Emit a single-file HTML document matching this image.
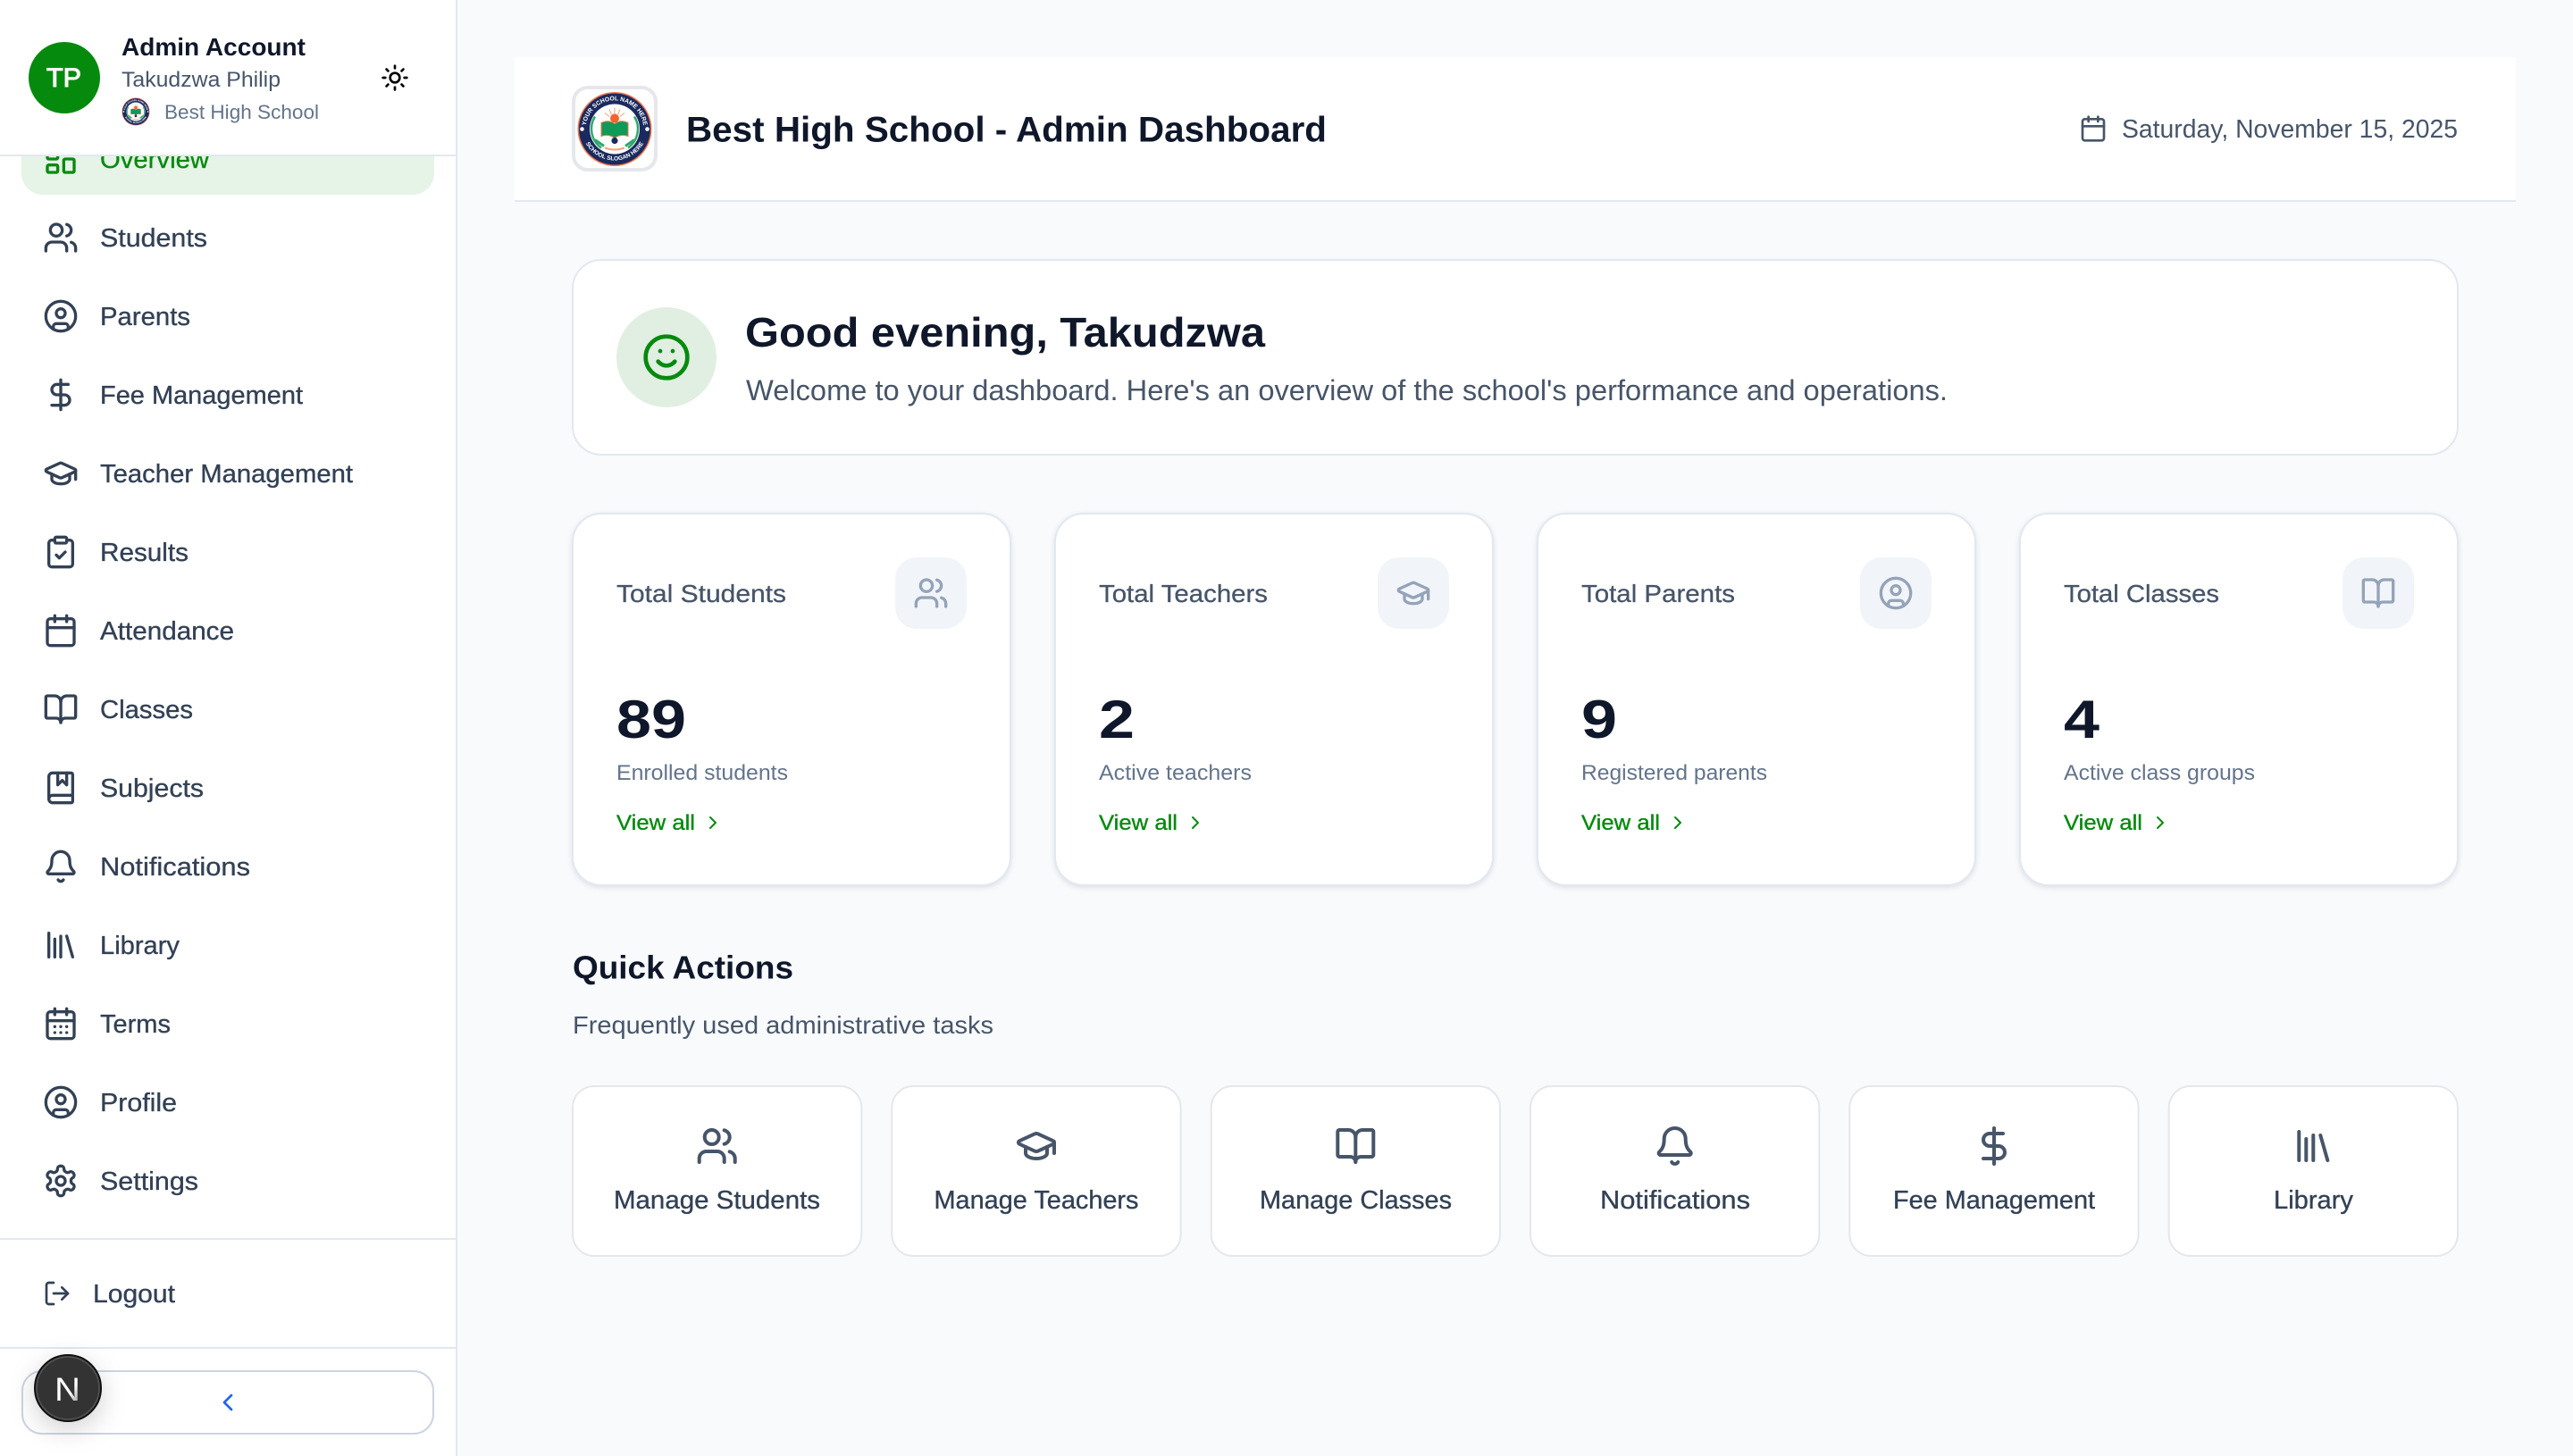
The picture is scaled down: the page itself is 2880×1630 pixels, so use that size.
<!DOCTYPE html>
<html lang="en">
<head>
<meta charset="utf-8">
<title>Best High School - Admin Dashboard</title>
<style>
html,body{margin:0;padding:0;width:2880px;height:1630px;overflow:hidden;background:#f8fafc}
svg{display:block}
text{font-family:"Liberation Sans",Arial,sans-serif}
.ic{fill:none;stroke-linecap:round;stroke-linejoin:round}
.nav{font-size:29px;fill:#334155;stroke:#334155;stroke-width:.35px}
.lab{font-size:28px;fill:#475569;stroke:#475569;stroke-width:.3px}
.num{font-size:60px;font-weight:700;fill:#0f172a}
.sub{font-size:24px;fill:#64748b}
.va{font-size:24px;fill:#068a0e;stroke:#068a0e;stroke-width:.35px}
.act{font-size:29px;fill:#334155;stroke:#334155;stroke-width:.35px;text-anchor:start}
.card{fill:#fff;stroke:#e2e8f0;stroke-width:2;filter:drop-shadow(0 2px 3px rgba(15,23,42,.11))}
.qa{fill:#fff;stroke:#e5e7eb;stroke-width:2}
</style>
</head>
<body>
<svg width="2880" height="1630" viewBox="0 0 2880 1630" xmlns="http://www.w3.org/2000/svg">
<defs>
<symbol id="users" viewBox="0 0 24 24"><path d="M16 21v-2a4 4 0 0 0-4-4H6a4 4 0 0 0-4 4v2"/><circle cx="9" cy="7" r="4"/><path d="M22 21v-2a4 4 0 0 0-3-3.87"/><path d="M16 3.13a4 4 0 0 1 0 7.75"/></symbol>
<symbol id="cuser" viewBox="0 0 24 24"><circle cx="12" cy="12" r="10"/><circle cx="12" cy="10" r="3"/><path d="M7 20.662V19a2 2 0 0 1 2-2h6a2 2 0 0 1 2 2v1.662"/></symbol>
<symbol id="dollar" viewBox="0 0 24 24"><path d="M12 2v20"/><path d="M17 5H9.5a3.5 3.5 0 0 0 0 7h5a3.5 3.5 0 0 1 0 7H6"/></symbol>
<symbol id="cap" viewBox="0 0 24 24"><path d="M21.42 10.922a1 1 0 0 0-.019-1.838L12.83 5.18a2 2 0 0 0-1.66 0L2.6 9.08a1 1 0 0 0 0 1.832l8.57 3.908a2 2 0 0 0 1.66 0z"/><path d="M22 10v6"/><path d="M6 12.5V16a6 3 0 0 0 12 0v-3.5"/></symbol>
<symbol id="clip" viewBox="0 0 24 24"><rect width="8" height="4" x="8" y="2" rx="1" ry="1"/><path d="M16 4h2a2 2 0 0 1 2 2v14a2 2 0 0 1-2 2H6a2 2 0 0 1-2-2V6a2 2 0 0 1 2-2h2"/><path d="m9 14 2 2 4-4"/></symbol>
<symbol id="cal" viewBox="0 0 24 24"><path d="M8 2v4"/><path d="M16 2v4"/><rect width="18" height="18" x="3" y="4" rx="2"/><path d="M3 10h18"/></symbol>
<symbol id="book" viewBox="0 0 24 24"><path d="M12 7v14"/><path d="M3 18a1 1 0 0 1-1-1V4a1 1 0 0 1 1-1h5a4 4 0 0 1 4 4 4 4 0 0 1 4-4h5a1 1 0 0 1 1 1v13a1 1 0 0 1-1 1h-6a3 3 0 0 0-3 3 3 3 0 0 0-3-3z"/></symbol>
<symbol id="bmark" viewBox="0 0 24 24"><path d="M10 2v8l3-3 3 3V2"/><path d="M4 19.5v-15A2.5 2.5 0 0 1 6.5 2H19a1 1 0 0 1 1 1v18a1 1 0 0 1-1 1H6.5a1 1 0 0 1 0-5H20"/></symbol>
<symbol id="bell" viewBox="0 0 24 24"><path d="M10.268 21a2 2 0 0 0 3.464 0"/><path d="M3.262 15.326A1 1 0 0 0 4 17h16a1 1 0 0 0 .74-1.673C19.41 13.956 18 12.499 18 8A6 6 0 0 0 6 8c0 4.499-1.411 5.956-2.738 7.326"/></symbol>
<symbol id="lib" viewBox="0 0 24 24"><path d="m16 6 4 14"/><path d="M12 6v14"/><path d="M8 8v12"/><path d="M4 4v16"/></symbol>
<symbol id="cald" viewBox="0 0 24 24"><path d="M8 2v4"/><path d="M16 2v4"/><rect width="18" height="18" x="3" y="4" rx="2"/><path d="M3 10h18"/><path d="M8 14h.01"/><path d="M12 14h.01"/><path d="M16 14h.01"/><path d="M8 18h.01"/><path d="M12 18h.01"/><path d="M16 18h.01"/></symbol>
<symbol id="gear" viewBox="0 0 24 24"><path d="M12.22 2h-.44a2 2 0 0 0-2 2v.18a2 2 0 0 1-1 1.73l-.43.25a2 2 0 0 1-2 0l-.15-.08a2 2 0 0 0-2.73.73l-.22.38a2 2 0 0 0 .73 2.73l.15.1a2 2 0 0 1 1 1.72v.51a2 2 0 0 1-1 1.74l-.15.09a2 2 0 0 0-.73 2.73l.22.38a2 2 0 0 0 2.73.73l.15-.08a2 2 0 0 1 2 0l.43.25a2 2 0 0 1 1 1.73V20a2 2 0 0 0 2 2h.44a2 2 0 0 0 2-2v-.18a2 2 0 0 1 1-1.73l.43-.25a2 2 0 0 1 2 0l.15.08a2 2 0 0 0 2.73-.73l.22-.39a2 2 0 0 0-.73-2.73l-.15-.08a2 2 0 0 1-1-1.74v-.5a2 2 0 0 1 1-1.74l.15-.09a2 2 0 0 0 .73-2.73l-.22-.38a2 2 0 0 0-2.73-.73l-.15.08a2 2 0 0 1-2 0l-.43-.25a2 2 0 0 1-1-1.73V4a2 2 0 0 0-2-2z"/><circle cx="12" cy="12" r="3"/></symbol>
<symbol id="logout" viewBox="0 0 24 24"><path d="M9 21H5a2 2 0 0 1-2-2V5a2 2 0 0 1 2-2h4"/><path d="m16 17 5-5-5-5"/><path d="M21 12H9"/></symbol>
<symbol id="sun" viewBox="0 0 24 24"><circle cx="12" cy="12" r="4"/><path d="M12 2v2"/><path d="M12 20v2"/><path d="m4.93 4.93 1.41 1.41"/><path d="m17.66 17.66 1.41 1.41"/><path d="M2 12h2"/><path d="M20 12h2"/><path d="m6.34 17.66-1.41 1.41"/><path d="m19.07 4.93-1.41 1.41"/></symbol>
<symbol id="smile" viewBox="0 0 24 24"><circle cx="12" cy="12" r="10"/><path d="M8 14s1.5 2 4 2 4-2 4-2"/><path d="M9 9h.01"/><path d="M15 9h.01"/></symbol>
<symbol id="dash" viewBox="0 0 24 24"><rect width="7" height="9" x="3" y="3" rx="1"/><rect width="7" height="5" x="14" y="3" rx="1"/><rect width="7" height="9" x="14" y="12" rx="1"/><rect width="7" height="5" x="3" y="16" rx="1"/></symbol>
<symbol id="chr" viewBox="0 0 24 24"><path d="m9 18 6-6-6-6"/></symbol>
<symbol id="chl" viewBox="0 0 24 24"><path d="m15 18-6-6 6-6"/></symbol>

<g id="emblem">
  <circle cx="0" cy="0" r="41.5" fill="#f0754a"/>
  <circle cx="0" cy="0" r="40" fill="#1a2a5e"/>
  <circle cx="0" cy="0" r="28" fill="#fff"/>
  <path id="arcTop" d="M-32 6A32.5 32.5 0 1 1 32 6" fill="none"/>
  <path id="arcBot" d="M-37 -2A37 37 0 0 0 37 -2" fill="none"/>
  <text font-size="6.8" font-weight="700" fill="#fff"><textPath href="#arcTop" startOffset="50%" text-anchor="middle">YOUR SCHOOL NAME HERE</textPath></text>
  <text font-size="6.6" font-weight="700" fill="#fff"><textPath href="#arcBot" startOffset="50%" text-anchor="middle">SCHOOL SLOGAN HERE</textPath></text>
  <circle cx="-36.5" cy="0" r="2.3" fill="#fff"/><circle cx="36.5" cy="0" r="2.3" fill="#fff"/>
  <path d="M-22 -14A26 26 0 0 0 -15 21M22 -14A26 26 0 0 1 15 21" fill="none" stroke="#2fa86c" stroke-width="2.4"/>
  <circle cx="0" cy="-12" r="5" fill="#f0652f"/>
  <path d="M0 -24V-17M-6 -22-3.5 -16M6 -22 3.5 -16M-11 -18-6 -14M11 -18 6 -14" stroke="#f5a27a" stroke-width="1" fill="none"/>
  <path d="M-15 -7Q-7 -11 0 -6Q7 -11 15 -7V8Q7 5 0 10Q-7 5 -15 8Z" fill="#0f9a58" stroke="#f0754a" stroke-width="1"/>
  <circle cx="0" cy="13" r="3.6" fill="#1a2a5e"/>
  <path d="M-22 12-12 19M22 12 12 19" stroke="#2fa86c" stroke-width="3"/>
  <path d="M-11 21Q0 25 11 21" stroke="#f5a27a" stroke-width="2" fill="none"/>
</g>
<linearGradient id="ng" x1="0" y1="0" x2="1" y2="1"><stop offset="0" stop-color="#fff"/><stop offset=".6" stop-color="#fff"/><stop offset="1" stop-color="#777"/></linearGradient>
</defs>

<!-- page -->
<rect width="2880" height="1630" fill="#f8fafc"/>

<!-- sidebar -->
<rect x="0" y="0" width="510" height="1630" fill="#fff"/>
<rect x="510" y="0" width="2" height="1630" fill="#e2e8f0"/>

<!-- active item -->
<rect x="24" y="138" width="462" height="80" rx="24" fill="#e6f3e7"/>
<use href="#dash" x="48" y="158" width="40" height="40" class="ic" stroke="#068a0e" stroke-width="2"/>
<text x="112" y="188" font-size="29" fill="#068a0e" stroke="#068a0e" stroke-width=".35" textLength="122" lengthAdjust="spacingAndGlyphs">Overview</text>

<!-- nav -->
<g class="ic" stroke="#334155" stroke-width="2">
<use href="#users" x="48" y="246" width="40" height="40"/>
<use href="#cuser" x="48" y="334" width="40" height="40"/>
<use href="#dollar" x="48" y="422" width="40" height="40"/>
<use href="#cap" x="48" y="510" width="40" height="40"/>
<use href="#clip" x="48" y="598" width="40" height="40"/>
<use href="#cal" x="48" y="686" width="40" height="40"/>
<use href="#book" x="48" y="774" width="40" height="40"/>
<use href="#bmark" x="48" y="862" width="40" height="40"/>
<use href="#bell" x="48" y="950" width="40" height="40"/>
<use href="#lib" x="48" y="1038" width="40" height="40"/>
<use href="#cald" x="48" y="1126" width="40" height="40"/>
<use href="#cuser" x="48" y="1214" width="40" height="40"/>
<use href="#gear" x="48" y="1302" width="40" height="40"/>
</g>
<text class="nav" x="112" y="276" textLength="120" lengthAdjust="spacingAndGlyphs">Students</text>
<text class="nav" x="112" y="364" textLength="101" lengthAdjust="spacingAndGlyphs">Parents</text>
<text class="nav" x="112" y="452" textLength="227" lengthAdjust="spacingAndGlyphs">Fee Management</text>
<text class="nav" x="112" y="540" textLength="283" lengthAdjust="spacingAndGlyphs">Teacher Management</text>
<text class="nav" x="112" y="628" textLength="99" lengthAdjust="spacingAndGlyphs">Results</text>
<text class="nav" x="112" y="716" textLength="150" lengthAdjust="spacingAndGlyphs">Attendance</text>
<text class="nav" x="112" y="804" textLength="104" lengthAdjust="spacingAndGlyphs">Classes</text>
<text class="nav" x="112" y="892" textLength="116" lengthAdjust="spacingAndGlyphs">Subjects</text>
<text class="nav" x="112" y="980" textLength="168" lengthAdjust="spacingAndGlyphs">Notifications</text>
<text class="nav" x="112" y="1068" textLength="89" lengthAdjust="spacingAndGlyphs">Library</text>
<text class="nav" x="112" y="1156" textLength="79" lengthAdjust="spacingAndGlyphs">Terms</text>
<text class="nav" x="112" y="1244" textLength="86" lengthAdjust="spacingAndGlyphs">Profile</text>
<text class="nav" x="112" y="1332" textLength="110" lengthAdjust="spacingAndGlyphs">Settings</text>

<rect x="0" y="1386" width="510" height="2" fill="#e2e8f0"/>
<use href="#logout" x="48" y="1432" width="32" height="32" class="ic" stroke="#334155" stroke-width="2"/>
<text class="nav" x="104" y="1458" textLength="92" lengthAdjust="spacingAndGlyphs">Logout</text>
<rect x="0" y="1508" width="510" height="2" fill="#e2e8f0"/>

<rect x="25" y="1535" width="460" height="70" rx="22" fill="#fff" stroke="#cbd5e1" stroke-width="2"/>
<use href="#chl" x="239" y="1554" width="32" height="32" class="ic" stroke="#2563eb" stroke-width="2"/>

<!-- next badge -->
<circle cx="76" cy="1554" r="37" fill="#333" stroke="#111" stroke-width="2" style="filter:drop-shadow(0 8px 14px rgba(0,0,0,.18))"/>
<circle cx="76" cy="1554" r="35" fill="none" stroke="#555" stroke-width="1.5"/>
<text x="61" y="1568" font-size="37" fill="url(#ng)" textLength="29" lengthAdjust="spacingAndGlyphs">N</text>

<!-- sidebar header (covers top of overview) -->
<rect x="0" y="0" width="510" height="173" fill="#fff"/>
<rect x="0" y="173" width="512" height="2" fill="#e2e8f0"/>
<circle cx="72" cy="87" r="40" fill="#068a0e"/>
<text x="52" y="97" font-size="30" fill="#fff" stroke="#fff" stroke-width="1" textLength="39" lengthAdjust="spacingAndGlyphs">TP</text>
<text x="136" y="62" font-size="28" font-weight="700" fill="#0f172a" textLength="206" lengthAdjust="spacingAndGlyphs">Admin Account</text>
<text x="136" y="97" font-size="24" fill="#475569" textLength="178" lengthAdjust="spacingAndGlyphs">Takudzwa Philip</text>
<use href="#emblem" transform="translate(152 125) scale(.373)"/>
<text x="184" y="133" font-size="22" fill="#64748b" textLength="173" lengthAdjust="spacingAndGlyphs">Best High School</text>
<use href="#sun" x="426" y="71" width="32" height="32" class="ic" stroke="#000" stroke-width="2"/>

<!-- top header -->
<rect x="576" y="64" width="2240" height="160" fill="#fff"/>
<rect x="576" y="224" width="2240" height="2" fill="#e2e8f0"/>
<rect x="642" y="98" width="92" height="92" rx="16" fill="#fff" stroke="#e5e7eb" stroke-width="4"/>
<use href="#emblem" transform="translate(688 144.5)"/>
<text x="768" y="158.5" font-size="40" font-weight="700" fill="#0f172a" textLength="717" lengthAdjust="spacingAndGlyphs">Best High School - Admin Dashboard</text>
<use href="#cal" x="2327" y="128" width="32" height="32" class="ic" stroke="#475569" stroke-width="2"/>
<text x="2375" y="154" font-size="29" fill="#475569" textLength="376" lengthAdjust="spacingAndGlyphs">Saturday, November 15, 2025</text>

<!-- welcome -->
<rect x="641" y="291" width="2110" height="218" rx="32" fill="#fff" stroke="#e2e8f0" stroke-width="2"/>
<circle cx="746" cy="400" r="56" fill="#e0efe1"/>
<use href="#smile" x="718" y="372" width="56" height="56" class="ic" stroke="#068a0e" stroke-width="2"/>
<text x="834" y="388" font-size="46" font-weight="700" fill="#0f172a" textLength="582" lengthAdjust="spacingAndGlyphs">Good evening, Takudzwa</text>
<text x="835" y="448" font-size="32" fill="#475569" textLength="1345" lengthAdjust="spacingAndGlyphs">Welcome to your dashboard. Here's an overview of the school's performance and operations.</text>

<!-- stat cards -->
<rect class="card" x="641" y="575" width="490" height="416" rx="32"/>
<rect class="card" x="1181" y="575" width="490" height="416" rx="32"/>
<rect class="card" x="1721" y="575" width="490" height="416" rx="32"/>
<rect class="card" x="2261" y="575" width="490" height="416" rx="32"/>

<rect x="1002" y="624" width="80" height="80" rx="24" fill="#f1f5f9"/>
<rect x="1542" y="624" width="80" height="80" rx="24" fill="#f1f5f9"/>
<rect x="2082" y="624" width="80" height="80" rx="24" fill="#f1f5f9"/>
<rect x="2622" y="624" width="80" height="80" rx="24" fill="#f1f5f9"/>
<g class="ic" stroke="#94a3b8" stroke-width="2">
<use href="#users" x="1022" y="644" width="40" height="40"/>
<use href="#cap" x="1562" y="644" width="40" height="40"/>
<use href="#cuser" x="2102" y="644" width="40" height="40"/>
<use href="#book" x="2642" y="644" width="40" height="40"/>
</g>

<text class="lab" x="690" y="674" textLength="190" lengthAdjust="spacingAndGlyphs">Total Students</text>
<text class="lab" x="1230" y="674" textLength="189" lengthAdjust="spacingAndGlyphs">Total Teachers</text>
<text class="lab" x="1770" y="674" textLength="172" lengthAdjust="spacingAndGlyphs">Total Parents</text>
<text class="lab" x="2310" y="674" textLength="174" lengthAdjust="spacingAndGlyphs">Total Classes</text>

<text class="num" x="690" y="826" textLength="78" lengthAdjust="spacingAndGlyphs">89</text>
<text class="num" x="1230" y="826" textLength="40" lengthAdjust="spacingAndGlyphs">2</text>
<text class="num" x="1770" y="826" textLength="40" lengthAdjust="spacingAndGlyphs">9</text>
<text class="num" x="2310" y="826" textLength="40" lengthAdjust="spacingAndGlyphs">4</text>

<text class="sub" x="690" y="873" textLength="192" lengthAdjust="spacingAndGlyphs">Enrolled students</text>
<text class="sub" x="1230" y="873" textLength="171" lengthAdjust="spacingAndGlyphs">Active teachers</text>
<text class="sub" x="1770" y="873" textLength="208" lengthAdjust="spacingAndGlyphs">Registered parents</text>
<text class="sub" x="2310" y="873" textLength="214" lengthAdjust="spacingAndGlyphs">Active class groups</text>

<text class="va" x="690" y="929" textLength="88" lengthAdjust="spacingAndGlyphs">View all</text>
<text class="va" x="1230" y="929" textLength="88" lengthAdjust="spacingAndGlyphs">View all</text>
<text class="va" x="1770" y="929" textLength="88" lengthAdjust="spacingAndGlyphs">View all</text>
<text class="va" x="2310" y="929" textLength="88" lengthAdjust="spacingAndGlyphs">View all</text>
<g class="ic" stroke="#068a0e" stroke-width="2">
<use href="#chr" x="786" y="909" width="24" height="24"/>
<use href="#chr" x="1326" y="909" width="24" height="24"/>
<use href="#chr" x="1866" y="909" width="24" height="24"/>
<use href="#chr" x="2406" y="909" width="24" height="24"/>
</g>

<!-- quick actions -->
<text x="641" y="1095.5" font-size="36" font-weight="700" fill="#0f172a" textLength="247" lengthAdjust="spacingAndGlyphs">Quick Actions</text>
<text x="641" y="1157" font-size="28" fill="#475569" textLength="471" lengthAdjust="spacingAndGlyphs">Frequently used administrative tasks</text>

<rect class="qa" x="641" y="1216" width="323.3" height="190" rx="24"/>
<rect class="qa" x="998.3" y="1216" width="323.3" height="190" rx="24"/>
<rect class="qa" x="1355.7" y="1216" width="323.3" height="190" rx="24"/>
<rect class="qa" x="1713" y="1216" width="323.3" height="190" rx="24"/>
<rect class="qa" x="2070.3" y="1216" width="323.3" height="190" rx="24"/>
<rect class="qa" x="2427.7" y="1216" width="323.3" height="190" rx="24"/>
<g class="ic" stroke="#475569" stroke-width="2">
<use href="#users" x="778.7" y="1259" width="48" height="48"/>
<use href="#cap" x="1136" y="1259" width="48" height="48"/>
<use href="#book" x="1493.3" y="1259" width="48" height="48"/>
<use href="#bell" x="1850.7" y="1259" width="48" height="48"/>
<use href="#dollar" x="2208" y="1259" width="48" height="48"/>
<use href="#lib" x="2565.3" y="1259" width="48" height="48"/>
</g>
<text class="act" x="687" y="1353" textLength="231" lengthAdjust="spacingAndGlyphs">Manage Students</text>
<text class="act" x="1045.5" y="1353" textLength="229" lengthAdjust="spacingAndGlyphs">Manage Teachers</text>
<text class="act" x="1410" y="1353" textLength="215" lengthAdjust="spacingAndGlyphs">Manage Classes</text>
<text class="act" x="1791" y="1353" textLength="168" lengthAdjust="spacingAndGlyphs">Notifications</text>
<text class="act" x="2119" y="1353" textLength="226" lengthAdjust="spacingAndGlyphs">Fee Management</text>
<text class="act" x="2545" y="1353" textLength="89" lengthAdjust="spacingAndGlyphs">Library</text>
</svg>
</body>
</html>
